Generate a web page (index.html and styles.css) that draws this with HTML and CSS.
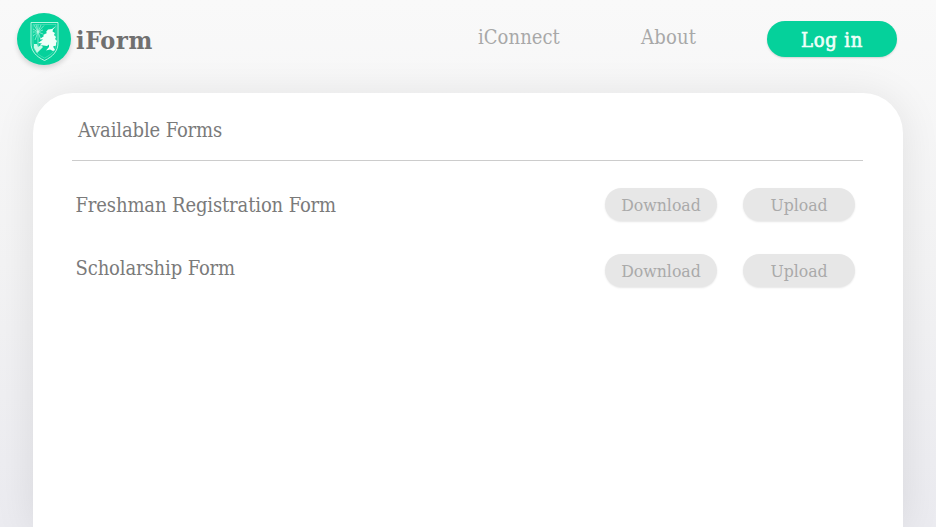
FILE: index.html
```html
<!DOCTYPE html>
<html lang="en">
<head>
<meta charset="utf-8">
<title>iForm</title>
<link rel="stylesheet" href="styles.css">
</head>
<body>
<header class="header">
  <a class="brand">
    <span class="logo">
      <svg viewBox="0 0 54 52" width="54" height="52" fill="none" stroke="#c8fbe8">
        <path d="M14 9.500H41V30C41 38 36 43.500 27.500 47.500C19 43.500 14 38 14 30Z" stroke-width=".9"/>
        <path d="M16 11.500H39V30C39 37 35 41.500 27.500 45C20 41.500 16 37 16 30Z" stroke-width=".3"/>
        <path d="M21 19V36M21 19L17 12M21 19L19 11.500M21 19V11.500M21 19L24 12M21 19L27 12.500M21 19L16 16M21 19H16M21 19L16 23M21 19L26 17M21 19L26 21M21 19L18 27M21 19L24 27" stroke-width=".6"/>
        <path d="M17 31H20L21 34L24 32L26 34L20 40L17 35Z" fill="#c8fbe8" stroke="none"/>
        <path d="M39 13L35 16L31 16.500L29 19L30 20L26 22L27 23L23 26L26 26.500L21 30L25 30.500L23 32L30 33L32 31.500L32 34L29 37.500L33 36.500L36 38L38 37L36 33.500L39 32.500L39 30L40 28L38 26L39 24L37 22L38 20L35.500 18.500L36 16.500Z" fill="#f0fff9" stroke="none"/>
      </svg>
    </span>
    <span class="brand-name">iForm</span>
  </a>
  <nav class="nav">
    <a class="link connect">iConnect</a>
    <a class="link about">About</a>
    <a class="login">Log in</a>
  </nav>
</header>
<main class="card">
  <h1 class="title">Available Forms</h1>
  <section class="row">
    <span class="name">Freshman Registration Form</span>
    <button class="action">Download</button>
    <button class="action upload">Upload</button>
  </section>
  <section class="row second">
    <span class="name">Scholarship Form</span>
    <button class="action">Download</button>
    <button class="action upload">Upload</button>
  </section>
</main>
</body>
</html>
```
FILE: styles.css
```css
* { box-sizing: border-box; }
html { background: #fff; }
body {
  margin: 0;
  height: 527px;
  overflow: hidden;
  background: linear-gradient(#f9f9f9, #f3f3f4 50%, #ebebf0);
  font-family: "DejaVu Serif Condensed", "DejaVu Serif", serif;
  font-stretch: condensed;
  font-size: 20px;
  letter-spacing: -.13px;
  color: #7a7a7a;
}
.header {
  height: 92.500px;
  padding: 13px 39px 0 16.500px;
  display: flex;
  align-items: flex-start;
  justify-content: space-between;
}
.brand { display: flex; }
.logo {
  width: 54px;
  height: 52px;
  border-radius: 50%;
  background: #05d19b;
  box-shadow: 0 3px 5px rgba(0, 0, 0, .14);
}
.logo svg { display: block; }
.brand-name {
  height: 52px;
  margin-left: 5.500px;
  font-size: 25px;
  font-weight: bold;
  letter-spacing: .6px;
  line-height: 56px;
  color: #707070;
}
.nav { display: flex; }
.link { color: #a8a8a8; line-height: 48px; white-space: nowrap; }
.connect { width: 163px; letter-spacing: .05px; }
.about { width: 126px; letter-spacing: .2px; }
.login {
  width: 130px;
  height: 36px;
  margin-top: 8px;
  border-radius: 18px;
  background: #05d19b;
  box-shadow: 0 1px 2px rgba(0, 0, 0, .15);
  color: #effff9;
  font-size: 20px;
  letter-spacing: .8px;
  -webkit-text-stroke: .6px #effff9;
  line-height: 38px;
  text-align: center;
}
.card {
  height: 434.500px;
  margin: 0 33px;
  padding: 0 40px 0 39px;
  border-radius: 40px 40px 0 0;
  background: #fff;
  box-shadow: 0 3px 40px rgba(0, 0, 0, .09);
}
.title {
  height: 68.500px;
  margin: 0;
  padding-left: 6px;
  border-bottom: 1px solid #ccc;
  font-size: inherit;
  font-weight: normal;
  line-height: 75px;
}
.row {
  display: flex;
  align-items: flex-start;
  height: 66px;
  padding: 27.300px 8px 0 3.500px;
}
.name { flex: 1; line-height: 35px; white-space: nowrap; }
.second .name { margin-top: -3.500px; }
.action {
  width: 112px;
  height: 33px;
  padding: 2px 0 0;
  border: 0;
  border-radius: 17px;
  background: #e7e7e7;
  box-shadow: 0 1px 2px rgba(0, 0, 0, .1);
  color: #aaa;
  font: inherit;
  font-size: 17.500px;
  letter-spacing: -.02px;
  line-height: 31px;
}
.upload { margin-left: 26px; }
```
